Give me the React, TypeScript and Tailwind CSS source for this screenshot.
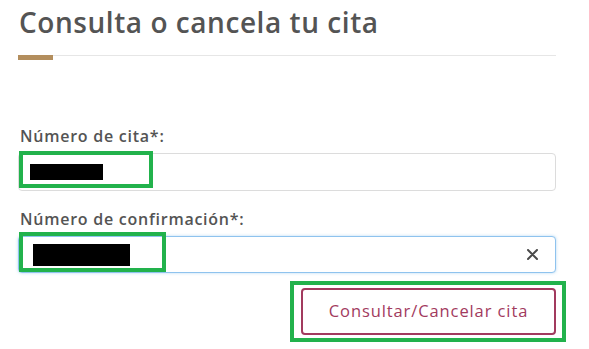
import React from "react";

export default function App() {
  return (
    <div
      className="relative w-[589px] h-[349px] overflow-hidden bg-white pl-[18px] pr-[33px] text-[#545454]"
      style={{ fontFamily: '"Open Sans", "Noto Sans", sans-serif' }}
    >
      <h2 className="mt-[5px] text-[28px] leading-[34px] font-semibold tracking-[0.55px] pl-px">
        Consulta o cancela tu cita
      </h2>
      <div className="mt-[16px] flex items-start">
        <div className="w-[35px] h-[5px] bg-[#b38e5d]" />
        <div className="flex-1 h-px bg-[#e6e6e6]" />
      </div>

      <label className="block mt-[66px] text-[16px] leading-[20px] font-semibold tracking-[0.75px] pl-[2px]">
        Número de cita*:
      </label>
      <div className="mt-[7px] h-[38px] rounded-[4px] border border-[#dcdcdc] bg-white flex items-center pl-[11px]">
        <div className="w-[73px] h-[16px] bg-black" />
      </div>

      <label className="block mt-[18px] text-[16px] leading-[20px] font-semibold tracking-[0.75px] pl-[2px]">
        Número de confirmación*:
      </label>
      <div className="mt-[7px] h-[37px] rounded-[4px] border border-[#8fc3ee] bg-white shadow-[0_0_3px_rgba(102,175,233,0.5)] flex items-center pl-[14px] pr-[17px]">
        <div className="w-[97px] h-[22px] bg-black" />
        <div className="flex-1" />
        <svg width="11" height="11" viewBox="0 0 11 11">
          <path d="M1 1 L10 10 M10 1 L1 10" stroke="#4a4a4a" strokeWidth="2" strokeLinecap="round" />
        </svg>
      </div>

      <div className="mt-[15px] flex justify-end">
        <button className="w-[255px] h-[47px] rounded-[4px] border-2 border-[#a23a5e] bg-white text-[#a23a5e] text-[16.5px] tracking-[0.9px]">
          Consultar/Cancelar cita
        </button>
      </div>

      {/* annotation overlays */}
      <div className="absolute left-[19px] top-[151px] w-[134px] h-[37px] border-[4px] border-[#22b24c]" />
      <div className="absolute left-[19px] top-[232px] w-[147px] h-[40px] border-[4px] border-[#22b24c]" />
      <div className="absolute left-[290px] top-[281px] w-[276px] h-[61px] border-[4px] border-[#22b24c]" />
    </div>
  );
}
